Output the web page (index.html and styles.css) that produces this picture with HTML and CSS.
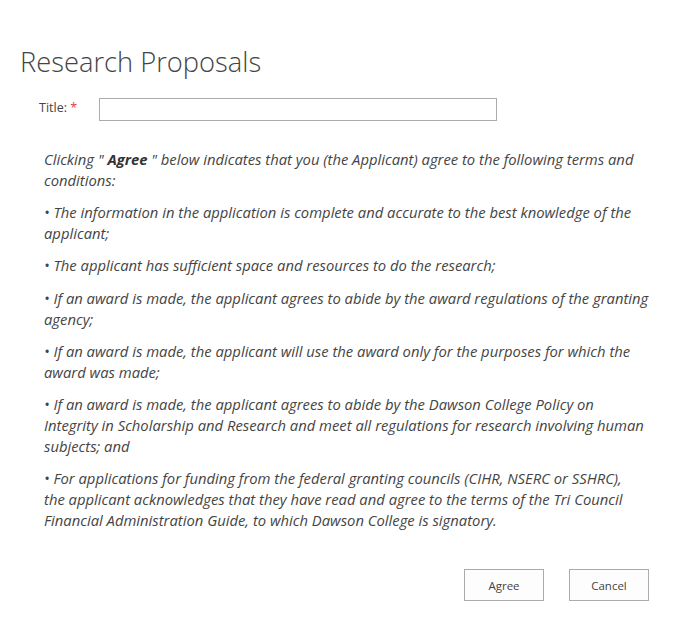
FILE: index.html
```html
<!DOCTYPE html>
<html>
<head>
	<title>Research Proposals</title>
	<meta charset="utf-8">
	<link rel="stylesheet" href="styles.css">
</head>
<body>
	<div class="form">
		<h1 class="form__title">Research Proposals</h1>
		<div class="form__row">
			<label class="form__label" for="title">Title: <span class="form__req">*</span></label>
			<input class="form__input" type="text" id="title" name="title" />
		</div>
		<div class="terms">
			<p>Clicking " <b>Agree</b> " below indicates that you (the Applicant) agree to the following terms and<br>conditions:</p>
			<p>&bull; The information in the application is complete and accurate to the best knowledge of the<br>applicant;</p>
			<p>&bull; The applicant has sufficient space and resources to do the research;</p>
			<p>&bull; If an award is made, the applicant agrees to abide by the award regulations of the granting<br>agency;</p>
			<p>&bull; If an award is made, the applicant will use the award only for the purposes for which the<br>award was made;</p>
			<p>&bull; If an award is made, the applicant agrees to abide by the Dawson College Policy on<br>Integrity in Scholarship and Research and meet all regulations for research involving human<br>subjects; and</p>
			<p>&bull; For applications for funding from the federal granting councils (CIHR, NSERC or SSHRC),<br>the applicant acknowledges that they have read and agree to the terms of the Tri Council<br>Financial Administration Guide, to which Dawson College is signatory.</p>
		</div>
		<div class="form__buttons">
			<button class="form__button" type="button">Agree</button>
			<button class="form__button" type="button">Cancel</button>
		</div>
	</div>
</body>
</html>
```

FILE: styles.css
```css
body {
	margin: 0;
	background: #fff;
	color: #444;
	font-family: "Open Sans", "Noto Sans", sans-serif;
}
.form {
	padding: 38px 0 0 20px;
	width: 630px;
}
.form__title {
	margin: 0;
	font-size: 27.3px;
	font-weight: 300;
	line-height: 48px;
	color: #444;
}
.form__row {
	display: flex;
	align-items: center;
	margin-top: 12px;
	padding-left: 19px;
}
.form__label {
	width: 60px;
	padding-bottom: 4px;
	font-size: 12.5px;
	color: #444;
}
.form__req {
	color: #e03c3c;
}
.form__input {
	width: 398px;
	height: 23px;
	box-sizing: border-box;
	border: 1px solid #ababab;
	margin: 0;
	padding: 0 4px;
}
.terms {
	padding: 28px 0 0 24px;
	font-style: italic;
	font-size: 14.8px;
	line-height: 21px;
	color: #444;
}
.terms p {
	margin: 0 0 11.2px;
}
.terms b {
	font-weight: 700;
	color: #333;
}
.form__buttons {
	display: flex;
	justify-content: flex-end;
	gap: 25px;
	margin-top: 38px;
	padding-right: 1px;
}
.form__button {
	width: 80px;
	height: 32px;
	border: 1px solid #ababab;
	background: #fdfdfd;
	font-family: "Open Sans", "Noto Sans", sans-serif;
	font-size: 11.5px;
	color: #444;
}
```
